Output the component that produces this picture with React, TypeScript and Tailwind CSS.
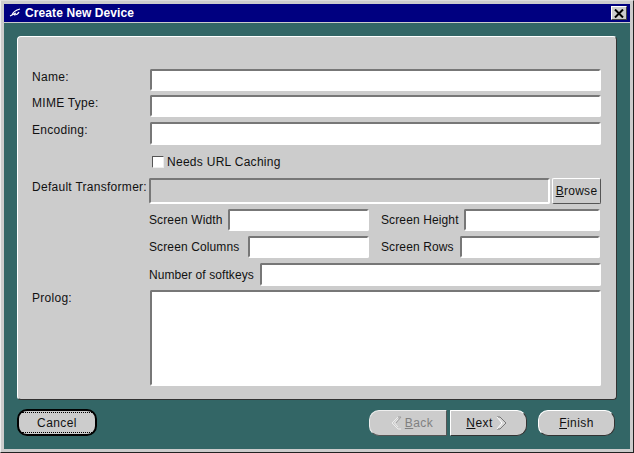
const field =
  "block h-full min-w-0 rounded-[2px] border-2 border-t-[#777777] border-l-[#777777] border-r-white border-b-white bg-white";

function TextRow({ label, height }: { label: string; height: string }) {
  return (
    <div className={`flex ${height}`}>
      <span className="w-[118px] shrink-0 pt-[1px]">{label}</span>
      <div className={`${field} flex-1`} />
    </div>
  );
}

function Pair({
  left,
  leftW,
  right,
  rightW,
}: {
  left: string;
  leftW: string;
  right: string;
  rightW: string;
}) {
  return (
    <div className="flex h-[22px] items-center pr-[1px] tracking-[0.12px]">
      <div className="flex h-full w-[220px] shrink-0 items-center">
        <span className={`${leftW} shrink-0 whitespace-nowrap`}>{left}</span>
        <div className={`${field} flex-1`} />
      </div>
      <div className="ml-[12px] flex h-full flex-1 items-center">
        <span className={`${rightW} shrink-0 whitespace-nowrap`}>{right}</span>
        <div className={`${field} flex-1`} />
      </div>
    </div>
  );
}

export default function App() {
  return (
    <div className="flex h-[453px] w-[634px] flex-col overflow-hidden border-[1px] border-t-[#dddddd] border-l-[#eeeeee] border-r-[#222222] border-b-[#222222] bg-[#cccccc] p-[3px] font-['Liberation_Sans',Arial,sans-serif] text-[12px] leading-[14px] tracking-[0.28px] text-[#111111]">
      {/* title bar */}
      <div className="flex h-[18px] shrink-0 items-center bg-[#000080] pl-[5px] pr-[3px]">
        <svg width="12" height="10" viewBox="0 0 12 10" className="mr-[4px]">
          <path d="M1 8 L7 5 M3 7 C4 4 7 2 11 1 M5 7 C7 7 9 6 10 4" stroke="#ffffff" strokeWidth="1.2" fill="none" />
        </svg>
        <span className="font-bold tracking-[0.1px] text-white">Create New Device</span>
        <button className="ml-auto flex h-[14px] w-[16px] items-center justify-center border border-t-white border-l-white border-r-[#444444] border-b-[#444444] bg-[#cccccc]">
          <svg width="10" height="9" viewBox="0 0 10 9">
            <path d="M1 0.5 L9 8.5 M9 0.5 L1 8.5" stroke="#000" strokeWidth="2" />
          </svg>
        </button>
      </div>

      {/* body */}
      <div className="mt-[1px] flex min-h-0 flex-1 flex-col bg-[#336666] px-[13px] pt-[13px]">
        <div className="flex h-[364px] w-[600px] shrink-0 flex-col rounded-[4px] border border-t-white border-l-white border-r-[#333333] border-b-[#333333] bg-[#cccccc] pl-[14px] pr-[15px] pt-[32px]">
          <div className="flex flex-col">
            <TextRow label="Name:" height="h-[22px]" />
            <div className="mt-[4px]">
              <TextRow label="MIME Type:" height="h-[22px]" />
            </div>
            <div className="mt-[5px]">
              <TextRow label="Encoding:" height="h-[23px]" />
            </div>
          </div>

          <label className="ml-[120px] mt-[9px] flex h-[15px] items-center gap-[3px]">
            <span className="h-[12px] w-[12px] rounded-[1px] border border-t-[#555555] border-l-[#555555] border-r-[#eeeeee] border-b-[#eeeeee] bg-white" />
            Needs URL Caching
          </label>

          <div className="mt-[9px] flex h-[26px]">
            <span className="w-[117px] shrink-0 whitespace-nowrap pt-[2px]">Default Transformer:</span>
            <div className="h-full flex-1 rounded-[2px] border-2 border-t-[#777777] border-l-[#777777] border-r-white border-b-white bg-[#cccccc]" />
            <button className="ml-[2px] h-full w-[49px] rounded-[2px] border border-t-white border-l-white border-r-[#555555] border-b-[#555555] bg-[#cccccc] text-center">
              <span className="underline">B</span>rowse
            </button>
          </div>

          <div className="ml-[117px] mt-[5px] flex flex-col gap-[5px]">
            <Pair left="Screen Width" leftW="w-[79px]" right="Screen Height" rightW="w-[83px]" />
            <Pair left="Screen Columns" leftW="w-[99px]" right="Screen Rows" rightW="w-[79px]" />
            <div className="flex h-[23px] items-center tracking-[0.08px]">
              <span className="shrink-0 whitespace-nowrap">Number of softkeys</span>
              <div className={`${field} ml-[6px] flex-1`} />
            </div>
          </div>

          <div className="mt-[4px] flex h-[96px]">
            <span className="w-[118px] shrink-0 pt-[1px]">Prolog:</span>
            <div className={`${field} flex-1`} />
          </div>
        </div>

        {/* footer buttons */}
        <div className="mt-[9px] flex items-center tracking-[0.42px]">
          <button className="flex h-[27px] w-[80px] items-center justify-center rounded-[10px] border-2 border-black bg-[#cccccc]">
            <span className="flex h-[21px] w-[70px] items-center justify-center border-y border-dotted border-black">
              Cancel
            </span>
          </button>
          <button className="ml-auto flex h-[26px] w-[78px] items-center justify-center gap-[3px] rounded-l-[10px] rounded-r-[1px] border border-t-[#eeeeee] border-l-[#eeeeee] border-r-[#555555] border-b-[#555555] bg-[#cccccc] pl-[8px] text-[#808080]">
            <svg width="11" height="14" viewBox="0 0 11 14">
              <path d="M7 1 L1 7 L7 13 L10 13 M7 3 L3.5 7 L7 11" stroke="#ececec" strokeWidth="1" fill="none" />
              <path d="M7 1 L10 1 L5 7 " stroke="#a0a0a0" strokeWidth="1" fill="none" />
            </svg>
            <span>
              <span className="underline">B</span>ack
            </span>
          </button>
          <button className="ml-[3px] flex h-[26px] w-[77px] items-center justify-center gap-[3px] rounded-l-[1px] rounded-r-[10px] border border-t-white border-l-white border-r-[#333333] border-b-[#333333] bg-[#cccccc] pr-[4px]">
            <span>
              <span className="underline">N</span>ext
            </span>
            <svg width="11" height="14" viewBox="0 0 11 14">
              <path d="M1 1 L4 1 L10 7 L4 13 L1 13 L6 7 Z" fill="#d8d8d8" stroke="none" />
              <path d="M1 1 L4 1 L10 7 L4 13 L1 13" stroke="#777777" strokeWidth="1" fill="none" />
              <path d="M1 1 L6 7 L1 13" stroke="#ffffff" strokeWidth="1" fill="none" />
            </svg>
          </button>
          <button className="ml-[11px] mr-[2px] flex h-[26px] w-[77px] items-center justify-center rounded-[10px] border border-t-white border-l-white border-r-[#333333] border-b-[#333333] bg-[#cccccc]">
            <span>
              <span className="underline">F</span>inish
            </span>
          </button>
        </div>
      </div>
    </div>
  );
}
